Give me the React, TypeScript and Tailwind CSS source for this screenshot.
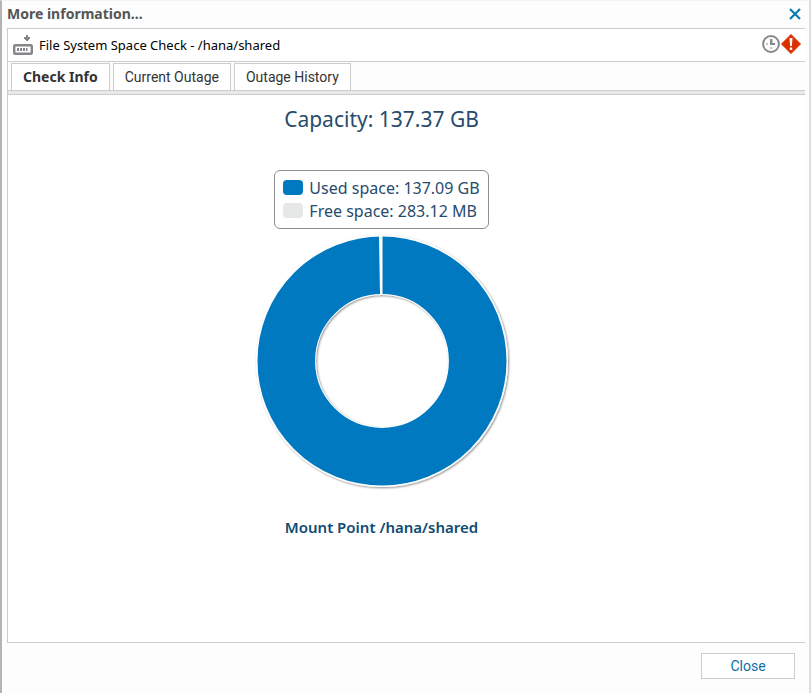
import { useState } from "react";

const TABS = ["Check Info", "Current Outage", "Outage History"];

const LEGEND = [
  { label: "Used space: 137.09 GB", swatch: "bg-[#0079c1]" },
  { label: "Free space: 283.12 MB", swatch: "bg-[#e6e8e8]" },
];

function FileSystemIcon() {
  return (
    <svg width="20" height="20" viewBox="0 0 20 20" aria-hidden="true">
      <path d="M13 0h2v2h2v2h-1v1h-1v1h-2V5h-1V4h-1V2h2z" fill="#85858a" />
      <rect x="1.2" y="10.2" width="17.6" height="8.6" rx="1" fill="#fff" stroke="#85858a" strokeWidth="2.4" />
      <path d="M4 13h2v3H4zM7 13h2v3H7zM10 13h2v3h-2zM13 13h1.5v3H13z" fill="#85858a" />
    </svg>
  );
}

function ClockIcon() {
  return (
    <svg width="18" height="18" viewBox="0 0 18 18" aria-hidden="true">
      <circle cx="9" cy="9" r="7.9" fill="#fff" stroke="#87888b" strokeWidth="2" />
      <path d="M8 4h2.4v4H13v2H8z" fill="#87888b" />
      <path d="M4 8.5h2v1H4zM8.5 12h1v2h-1z" fill="#87888b" />
    </svg>
  );
}

function AlertIcon() {
  return (
    <svg width="20" height="20" viewBox="0 0 20 20" aria-hidden="true">
      <path d="M10 .5 19.5 10 10 19.5.5 10z" fill="#dc2f00" stroke="#dc2f00" strokeLinejoin="round" />
      <path d="M8.5 4h3l-.6 8H9.1zM8.8 13.5h2.4V16H8.8z" fill="#fff" />
    </svg>
  );
}

function Donut() {
  return (
    <svg width="264" height="264" viewBox="0 0 264 264" role="img" aria-label="Used and free space">
      <defs>
        <filter id="soft" filterUnits="userSpaceOnUse" x="0" y="0" width="264" height="264">
          <feDropShadow dx="1" dy="1" stdDeviation="1" floodColor="#000" floodOpacity="0.45" />
        </filter>
      </defs>
      <g filter="url(#soft)">
        <circle cx="132" cy="132" r="96" fill="none" stroke="#fff" strokeWidth="60" />
      </g>
      <circle cx="132" cy="132" r="95.7" fill="none" stroke="#0079c1" strokeWidth="57.6" />
      <path d="M129 6.5 130 65.5H132.5V6.5z" fill="#fff" />
    </svg>
  );
}

export default function App() {
  const [active, setActive] = useState(0);
  return (
    <div className="flex min-h-screen flex-col border-t border-r-2 border-l-2 border-t-[#f3f3f3] border-r-[#dedede] border-l-[#b4b4b4] bg-[#fdfdfd] pr-1 pl-[5px] font-['Roboto','Noto_Sans',sans-serif] text-sm leading-5 text-[#333]">
      <header className="flex h-[27px] items-center justify-between pr-1 pb-0.5">
        <h1 className="font-['Noto_Sans',sans-serif] font-bold text-[#555]">More information...</h1>
        <button type="button" aria-label="Close window" className="text-[#0a7cb5]">
          <svg width="12" height="12" viewBox="0 0 12 12" aria-hidden="true">
            <path d="M1 1l10 10M11 1 1 11" stroke="currentColor" strokeWidth="2.2" />
          </svg>
        </button>
      </header>
      <main className="flex grow flex-col border-y border-l border-[#ccc] bg-white">
        <div className="flex h-[33px] items-center border-b border-[#ccc] pr-1 pl-[5px] text-black">
          <FileSystemIcon />
          <h2 className="grow pl-1.5 font-['Noto_Sans',sans-serif] text-[13px]">
            File System Space Check - /hana/shared
          </h2>
          <div className="flex items-center gap-px pb-0.5">
            <ClockIcon />
            <AlertIcon />
          </div>
        </div>
        <div role="tablist" className="flex gap-[3px] bg-[#fdfdfd] px-[3px] pt-px">
          {TABS.map((tab, i) => (
            <button
              key={tab}
              type="button"
              role="tab"
              aria-selected={i === active}
              onClick={() => setActive(i)}
              className={
                i === active
                  ? "h-[27px] border border-b-0 border-[#ccc] bg-white px-[11px] font-['Noto_Sans',sans-serif] font-bold"
                  : "h-[27px] border border-b-0 border-[#ccc] bg-white px-[11px]"
              }
            >
              {tab}
            </button>
          ))}
        </div>
        <div className="h-[5px] border-y border-[#ccc] bg-[#e9e9e9]" />
        <section className="flex grow flex-col items-center pr-[50px] font-['Noto_Sans',sans-serif] text-[#274b6d]">
          <h3 className="pt-3 text-[21px] leading-6">Capacity: 137.37 GB</h3>
          <ul className="mt-[39px] rounded-md border border-[#909090] px-2 pt-[5px] pb-1.5 text-base">
            {LEGEND.map((item) => (
              <li key={item.label} className="flex h-[23px] items-center gap-1.5">
                <span className={`h-[15px] w-5 rounded-sm ${item.swatch}`} />
                {item.label}
              </li>
            ))}
          </ul>
          <Donut />
          <p className="pt-6 pb-4 text-[15px] font-semibold text-[#0f4b73]">Mount Point /hana/shared</p>
        </section>
      </main>
      <footer className="flex h-[50px] items-start justify-end pt-2.5 pr-[10px]">
        <button type="button" className="h-[26px] w-[94px] border border-[#ccc] bg-white text-[#0a6fa6]">
          Close
        </button>
      </footer>
    </div>
  );
}
